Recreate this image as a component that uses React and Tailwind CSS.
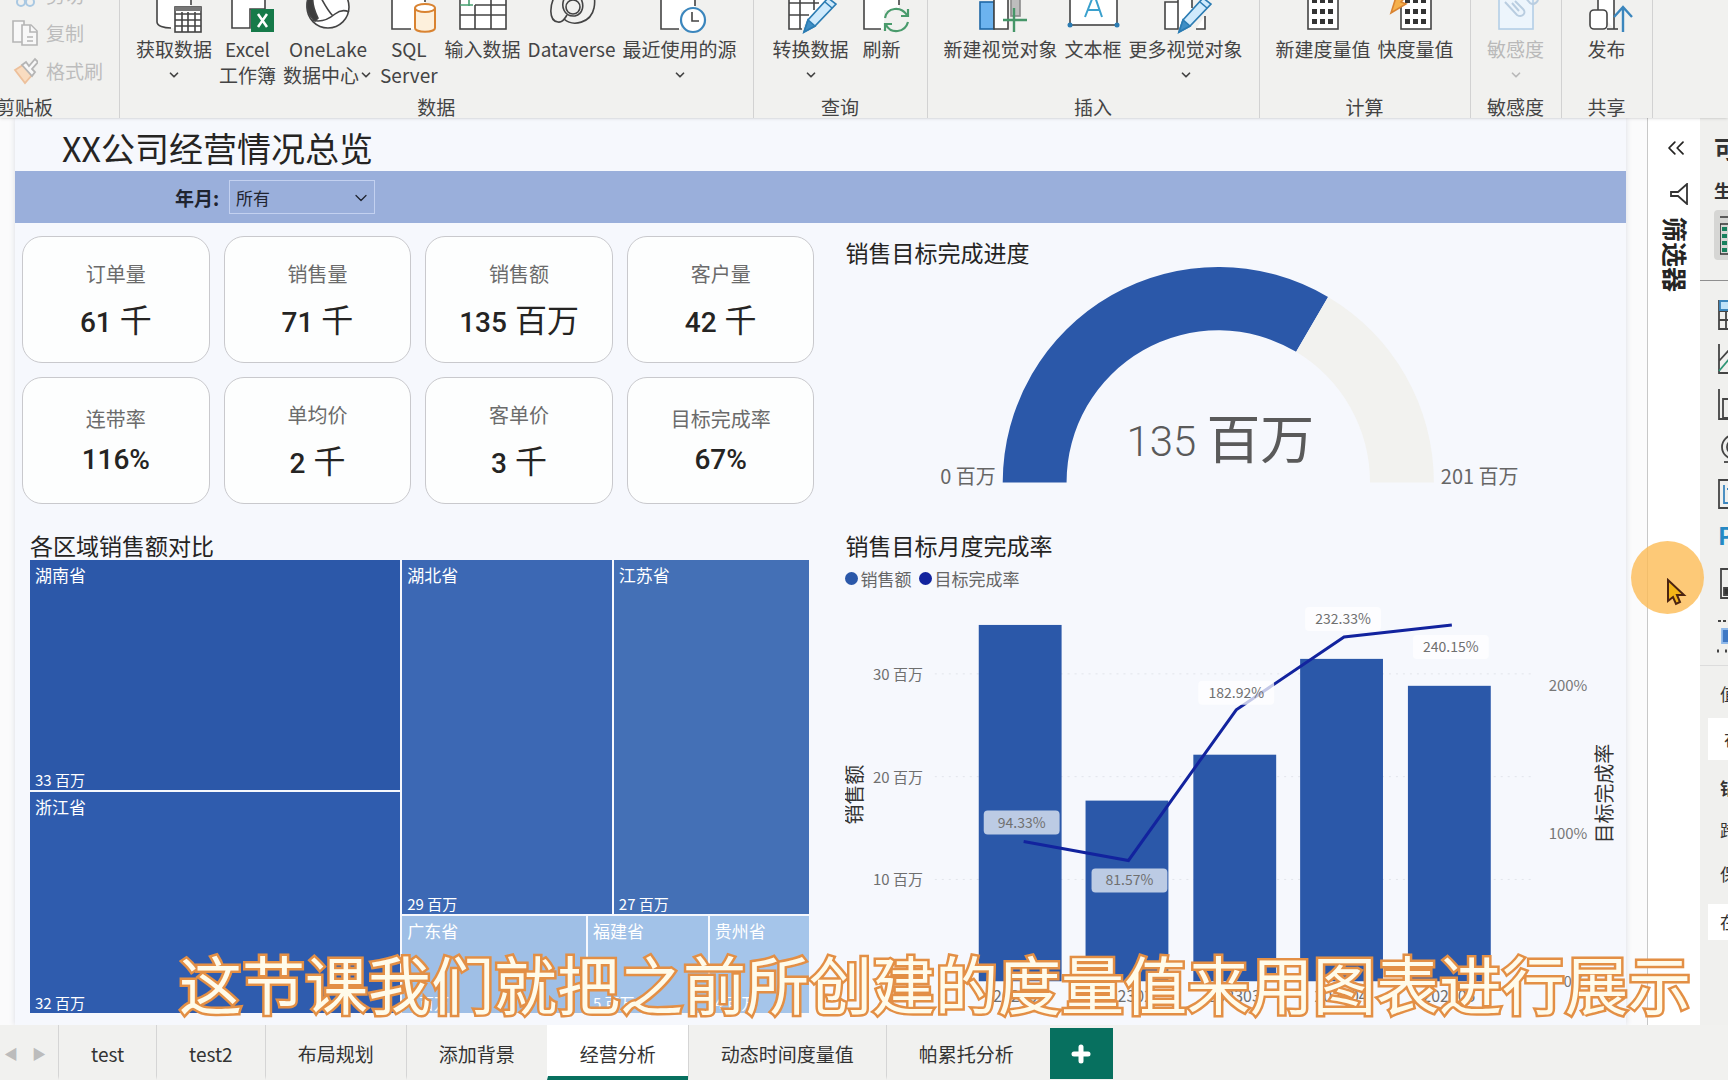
import { ChevronDown, ChevronsLeft, Plus } from 'lucide-react'

function Icon({ children }) {
  return (
    <svg viewBox="0 0 52 33" className="w-[52px] h-[33px] overflow-visible shrink-0" fill="none" stroke="#444" strokeWidth="1.6" aria-hidden="true">
      {children}
    </svg>
  )
}

function Pencil() {
  return (
    <g stroke="#2b7cb3" fill="#cfeafc">
      <path d="M19 32L23 20L43 -2L51 4L30 26Z" />
      <path d="M19 32L23 20L30 26Z" fill="#3f8fc6" />
      <path d="M40 2L47 8" />
    </g>
  )
}

function Keypad() {
  return (
    <>
      <rect x="11" y="-14" width="30" height="43" fill="#fff" />
      {[-2, 9, 19].map((y) =>
        [15, 23, 31].map((x) => <rect key={`${x}-${y}`} x={x} y={y} width="5" height="5" fill="#333" stroke="none" />)
      )}
    </>
  )
}

const icons = {
  getData: (
    <Icon>
      <path d="M9 -4V22C9 27 16 28 23 28L27 28V7H43V-4" fill="#fff" stroke="none" />
      <path d="M9 -4V22C9 26 16 28 23 28M43 -4V5" />
      <rect x="27" y="7" width="26" height="25" fill="#fff" />
      <path d="M27 9H53" strokeWidth="4" stroke="#777" />
      <path d="M27 14H53M27 20H53M27 26H53M34 12V32M40 12V32M47 12V32" />
    </Icon>
  ),
  excel: (
    <Icon>
      <path d="M10 -4V28H28V9H43V-4" fill="#fff" />
      <rect x="29" y="9" width="23" height="23" fill="#167a49" stroke="none" />
      <path d="M36 14L45 27M45 14L36 27" stroke="#fff" strokeWidth="2.5" />
    </Icon>
  ),
  oneLake: (
    <Icon>
      <circle cx="26" cy="7" r="21" fill="#fff" />
      <path d="M10 -8C3 -1 3 13 13 21L16 18C12 10 9 0 12 -8Z" fill="#3d3d3d" />
      <path d="M16 -8C20 0 25 10 31 16M10 20C20 23 27 19 33 14C38 10 43 10 47 12" />
    </Icon>
  ),
  sql: (
    <Icon>
      <path d="M9 -4V29H31V8H42V-4" fill="#fff" stroke="none" />
      <path d="M9 -4V29H28M42 -4V2" />
      <path d="M32 8V28C32 33 52 33 52 28V8" fill="#fdf0dc" stroke="#d98331" strokeWidth="2" />
      <ellipse cx="42" cy="8" rx="10" ry="4" fill="#fff" stroke="#d98331" strokeWidth="2" />
    </Icon>
  ),
  enterData: (
    <Icon>
      <rect x="3" y="-12" width="46" height="41" fill="#fff" />
      <path d="M18 5H49M3 15H49M18 5V29M34 -4V29" />
      <path d="M3 5H16M12 -2V6" stroke="#48a071" />
    </Icon>
  ),
  dataverse: (
    <Icon>
      <circle cx="27" cy="7" r="7" />
      <path d="M9 -4C4 4 2 21 12 22C17 23 19 18 21 15" />
      <path d="M19 -3C14 6 18 17 29 16C37 14 39 5 34 -3" />
      <path d="M18 19C27 27 45 23 48 8C49 3 49 0 48 -4" />
    </Icon>
  ),
  recent: (
    <Icon>
      <path d="M7 -4V29H27V10H41V-4" fill="#fff" stroke="none" />
      <path d="M7 -4V29H25M41 -4V6" />
      <circle cx="39" cy="20" r="12" fill="#fff" stroke="#3b86bd" strokeWidth="2.2" />
      <path d="M38 12V21H45" />
    </Icon>
  ),
  transform: (
    <Icon>
      <path d="M4 -4V29H17L22 20L40 0V-4Z" fill="#fff" stroke="none" />
      <path d="M4 -4V29H17M4 3H34M4 15H24M15 -4V29M29 -4V10" />
      <Pencil />
    </Icon>
  ),
  refresh: (
    <Icon>
      <path d="M8 -4V29H28V10H43V-4" fill="#fff" stroke="none" />
      <path d="M8 -4V29H25M43 -4V5" />
      <path d="M29 18C31 7 45 6 51 15M52 9V16H45M52 22C49 33 35 34 30 25M29 31V24H36" stroke="#4a9b6c" strokeWidth="2.2" />
    </Icon>
  ),
  newVisual: (
    <Icon>
      <rect x="5" y="2" width="14" height="27" fill="#6cb3ef" stroke="#1f67a6" />
      <path d="M19 29V-4H33V29Z" fill="#fff" />
      <rect x="36" y="-8" width="9" height="24" fill="#bdbdbd" stroke="#8a8a8a" />
      <path d="M39 8V32M28 20H52" stroke="#459668" strokeWidth="2.4" />
    </Icon>
  ),
  textBox: (
    <Icon>
      <rect x="3" y="-12" width="47" height="37" fill="#fff" />
      <path d="M18 17L27 -6L35 17M21 10H32" stroke="#3aa0cd" strokeWidth="2" />
      <circle cx="3" cy="25" r="2.5" fill="#2b7cb3" stroke="none" />
      <circle cx="50" cy="25" r="2.5" fill="#2b7cb3" stroke="none" />
    </Icon>
  ),
  moreVisuals: (
    <Icon>
      <path d="M5 2H18V29H5ZM18 29V-4H32V8M36 29H45V16" fill="#fff" />
      <Pencil />
    </Icon>
  ),
  measure: (
    <Icon>
      <Keypad />
    </Icon>
  ),
  quickMeasure: (
    <Icon>
      <Keypad />
      <path d="M7 -6L1 13L16 4L11 2L18 -6Z" fill="#f5b04b" stroke="#d98331" />
    </Icon>
  ),
  sensitivity: (
    <Icon>
      <rect x="9" y="-12" width="34" height="41" fill="#edf5fc" stroke="#b3cfe6" />
      <path d="M15 2L27 15C32 18 37 13 33 9L25 1M22 3L29 11M34 -4L40 3C44 6 50 1 47 -3" stroke="#b9cde0" strokeWidth="2" />
    </Icon>
  ),
  publish: (
    <Icon>
      <path d="M17 10V-2C17 -8 33 -8 33 -2V29" fill="#fff" />
      <rect x="9" y="10" width="17" height="19" rx="4" fill="#fff" />
      <path d="M26 29H37" />
      <path d="M42 32V7M33 17L42 7L51 17" stroke="#3b86bd" strokeWidth="2.4" />
    </Icon>
  ),
}

const ribbonGroups = [
  {
    name: '数据',
    items: [
      { icon: 'getData', label: '获取数据', menu: true },
      { icon: 'excel', label: 'Excel', second: '工作簿' },
      { icon: 'oneLake', label: 'OneLake', second: '数据中心', menu: true },
      { icon: 'sql', label: 'SQL', second: 'Server' },
      { icon: 'enterData', label: '输入数据' },
      { icon: 'dataverse', label: 'Dataverse' },
      { icon: 'recent', label: '最近使用的源', menu: true },
    ],
  },
  {
    name: '查询',
    items: [
      { icon: 'transform', label: '转换数据', menu: true },
      { icon: 'refresh', label: '刷新' },
    ],
  },
  {
    name: '插入',
    items: [
      { icon: 'newVisual', label: '新建视觉对象' },
      { icon: 'textBox', label: '文本框' },
      { icon: 'moreVisuals', label: '更多视觉对象', menu: true },
    ],
  },
  {
    name: '计算',
    items: [
      { icon: 'measure', label: '新建度量值' },
      { icon: 'quickMeasure', label: '快度量值' },
    ],
  },
  { name: '敏感度', items: [{ icon: 'sensitivity', label: '敏感度', menu: true, disabled: true }] },
  { name: '共享', items: [{ icon: 'publish', label: '发布' }] },
]

function Ribbon() {
  return (
    <header className="flex h-[118px] overflow-hidden bg-[#f1f1ef] text-[19px] leading-[26px] text-[#444] whitespace-nowrap shadow-sm relative">
      <div className="w-[120px] shrink-0 flex flex-col justify-between border-r border-[#d2d2d2]">
        <div className="-mt-6 pl-3 text-[#bdbdbd]">
          <button disabled className="flex items-center gap-2 h-[38px]">
            <svg viewBox="0 0 26 28" className="w-[26px] h-7" fill="none" stroke="#a9c8e2" strokeWidth="2">
              <circle cx="9" cy="21" r="4" />
              <circle cx="18" cy="21" r="4" />
              <path d="M11 17L18 2M16 17L9 2" />
            </svg>
            剪切
          </button>
          <button disabled className="flex items-center gap-2 h-[38px]">
            <svg viewBox="0 0 26 28" className="w-[26px] h-7" fill="#f8f8f8" stroke="#b5b5b5" strokeWidth="1.6">
              <path d="M1 2H12V23H1Z" />
              <path d="M10 6H19L25 12V26H10Z" />
              <path d="M18 6V13H25M15 18H21M15 22H21" />
            </svg>
            复制
          </button>
          <button disabled className="flex items-center gap-2 h-[38px]">
            <svg viewBox="0 0 26 28" className="w-[26px] h-7" fill="#f8f8f8" stroke="#b5b5b5" strokeWidth="1.8">
              <path d="M3 13L11 8L20 18L13 26Z" fill="#f9dcc0" stroke="#edc09b" />
              <path d="M10 8L14 5L17 9L23 2L26 5L20 12L23 15L20 19Z" />
            </svg>
            格式刷
          </button>
        </div>
        <div className="-ml-1 leading-[22px]">剪贴板</div>
      </div>
      {ribbonGroups.map((group) => (
        <div key={group.name} className="flex flex-col justify-between px-4 min-w-[91px] border-r border-[#d2d2d2] nth-[3]:min-w-[174px]">
          <div className="flex justify-center gap-[7px]">
            {group.items.map((item) => (
              <button key={item.label} disabled={item.disabled} className="flex flex-col items-center disabled:text-[#b9b9b9]">
                {icons[item.icon]}
                <span className="mt-[3px]">{item.label}</span>
                <span className="flex items-center h-[26px]">
                  {item.second}
                  {item.menu && <ChevronDown size={14} strokeWidth={3} />}
                </span>
              </button>
            ))}
          </div>
          <div className="text-center leading-[22px]">{group.name}</div>
        </div>
      ))}
    </header>
  )
}

const cards = [
  { label: '订单量', value: '61', unit: '千' },
  { label: '销售量', value: '71', unit: '千' },
  { label: '销售额', value: '135', unit: '百万' },
  { label: '客户量', value: '42', unit: '千' },
  { label: '连带率', value: '116%' },
  { label: '单均价', value: '2', unit: '千' },
  { label: '客单价', value: '3', unit: '千' },
  { label: '目标完成率', value: '67%' },
]

function KpiCard({ label, value, unit }) {
  return (
    <div className="h-[127px] pt-1.5 flex flex-col items-center justify-center rounded-[20px] border border-[#c9c9cd] bg-[#fdfefe]">
      <div className="text-xl leading-8 text-[#6b6b6b]">{label}</div>
      <div className="flex items-baseline gap-2 text-[#252423]">
        <span className="font-['Roboto',sans-serif] text-[28px] leading-[50px] font-medium">{value}</span>
        {unit && <span className="text-[32px] leading-[56px]">{unit}</span>}
      </div>
    </div>
  )
}

function Tile({ name, value, className }) {
  return (
    <div className={`flex flex-col justify-between px-[5px] pt-[3px] text-white whitespace-nowrap min-w-0 ${className}`}>
      <span className="text-[17px] leading-6">{name}</span>
      <span className="text-[15px] leading-5">{value}</span>
    </div>
  )
}

function Treemap() {
  return (
    <div className="flex-1 grid grid-cols-[371fr_408fr] gap-0.5">
      <div className="grid grid-rows-[230fr_221fr] gap-0.5">
        <Tile name="湖南省" value="33 百万" className="bg-[#2c58a9]" />
        <Tile name="浙江省" value="32 百万" className="bg-[#2f5cae]" />
      </div>
      <div className="grid grid-rows-[354fr_97fr] gap-0.5">
        <div className="grid grid-cols-[210fr_196fr] gap-0.5">
          <Tile name="湖北省" value="29 百万" className="bg-[#3c68b4]" />
          <Tile name="江苏省" value="27 百万" className="bg-[#4470b6]" />
        </div>
        <div className="grid grid-cols-[184fr_120fr_100fr] gap-0.5">
          <Tile name="广东省" value="7 百万" className="bg-[#9fbfe6]" />
          <Tile name="福建省" value="5 百万" className="bg-[#a2c2e8]" />
          <Tile name="贵州省" value="4 百万" className="bg-[#a5c5ea]" />
        </div>
      </div>
    </div>
  )
}

function Gauge() {
  return (
    <svg viewBox="0 0 782 265" className="w-full overflow-visible block" role="img" aria-label="销售目标完成进度">
      <path d="M158 215A216 216 0 0 1 484 29L452 84A152 152 0 0 0 222 215Z" fill="#2b58a9" />
      <path d="M484 29A216 216 0 0 1 590 215H526A152 152 0 0 0 452 84Z" fill="#f2f2ef" />
      <text x="151" y="216" textAnchor="end" fontSize="20" fill="#666">0 百万</text>
      <text x="597" y="216" fontSize="20" fill="#666">201 百万</text>
      <text x="376" y="191" textAnchor="middle" fill="#5a5a5a">
        <tspan dy="-3" fontFamily="Roboto, sans-serif" fontWeight="300" fontSize="42">135 </tspan>
        <tspan dy="3" fontSize="54">百万</tspan>
      </text>
    </svg>
  )
}

const months = [
  { month: '202301', x: 134, top: 30 },
  { month: '202302', x: 241, top: 206 },
  { month: '202303', x: 349, top: 160 },
  { month: '202304', x: 456, top: 64 },
  { month: '202305', x: 564, top: 91 },
]

const rates = [
  { text: '94.33%', x: 177, y: 228, boxed: true },
  { text: '81.57%', x: 285, y: 286, boxed: true },
  { text: '182.92%', x: 392, y: 98 },
  { text: '232.33%', x: 499, y: 24 },
  { text: '240.15%', x: 607, y: 52 },
]

function ComboChart() {
  return (
    <svg viewBox="0 0 782 430" className="w-full block" role="img" aria-label="销售目标月度完成率">
      {[79, 182, 285].map((y, i) => (
        <g key={y}>
          <path d={`M90 ${y}H690`} stroke="#e2e5eb" strokeDasharray="2 5" />
          <text x="28" y={y + 6} fontSize="15" fill="#6f6f6f">{30 - i * 10} 百万</text>
        </g>
      ))}
      {months.map((m) => (
        <g key={m.month}>
          <rect x={m.x} y={m.top} width="83" height={387 - m.top} fill="#2b58a9" />
          <text x={m.x + 41} y="408" textAnchor="middle" fontSize="16" fill="#6f6f6f">{m.month}</text>
        </g>
      ))}
      <polyline points="179,247 284,266 392,115 500,42 608,30" fill="none" stroke="#12239e" strokeWidth="3" />
      {rates.map((r) => (
        <g key={r.text}>
          <rect x={r.x - 38} y={r.y - 12} width="76" height="24" rx="4" fill={r.boxed ? '#bccbe4' : '#fff'} fillOpacity={r.boxed ? 1 : 0.75} />
          <text x={r.x} y={r.y + 5} textAnchor="middle" fontSize="14" fill="#6f6f6f">{r.text}</text>
        </g>
      ))}
      <g fontSize="15" fill="#777">
        <text x="705" y="96">200%</text>
        <text x="705" y="244">100%</text>
        <text x="742" y="393" textAnchor="end">0%</text>
      </g>
      <g fontSize="20" fill="#333" textAnchor="middle">
        <text transform="translate(17 200) rotate(-90)">销售额</text>
        <text transform="translate(768 199) rotate(-90)">目标完成率</text>
      </g>
    </svg>
  )
}

function Report() {
  return (
    <main className="flex-1 min-w-0 bg-[#fbfbfc] pl-[15px] pr-[21px] flex">
      <div className="flex-1 min-w-0 flex flex-col bg-[#f6f8fd] shadow-[0_0_6px_#d9dbe2]">
        <h1 className="h-[53px] pl-[47px] pt-1.5 text-[34px] leading-[48px] font-normal text-[#252423]">XX公司经营情况总览</h1>
        <div className="h-[52px] bg-[#9aafdb] flex items-center pl-40 text-[#1f2430]">
          <label htmlFor="month" className="pt-0.5 text-[19px] font-bold w-[54px]">年月:</label>
          <div className="relative">
            <select id="month" className="appearance-none w-[146px] h-[34px] pl-1.5 pt-0.5 border border-[#c3d1f0] bg-transparent text-[17px]">
              <option>所有</option>
            </select>
            <ChevronDown size={20} strokeWidth={1.5} className="absolute right-1 top-2 pointer-events-none" />
          </div>
        </div>
        <div className="flex-1 grid grid-cols-[813fr_799fr]">
          <section className="flex flex-col pt-[13px] pl-[7px] pr-[13px] pb-3">
            <div className="grid grid-cols-4 gap-[14px]">
              {cards.map((card) => (
                <KpiCard key={card.label} {...card} />
              ))}
            </div>
            <div className="flex-1 flex flex-col mt-7 ml-2 mr-[5px]">
              <h2 className="mb-0.5 text-[23px] leading-[26px] text-[#252423]">各区域销售额对比</h2>
              <Treemap />
            </div>
          </section>
          <section className="pt-4 pl-[18px]">
            <h2 className="mb-[3px] text-[23px] leading-[26px] text-[#252423]">销售目标完成进度</h2>
            <Gauge />
            <h2 className="mb-[3px] text-[23px] leading-[26px] text-[#252423]">销售目标月度完成率</h2>
            <div className="flex items-center gap-2 h-[34px] text-[17px] text-[#666]">
              <span className="flex items-center gap-0.5">
                <span className="w-[13px] h-[13px] rounded-full bg-[#2b58a9]"></span>销售额
              </span>
              <span className="flex items-center gap-0.5">
                <span className="w-[13px] h-[13px] rounded-full bg-[#12239e]"></span>目标完成率
              </span>
            </div>
            <ComboChart />
          </section>
        </div>
      </div>
    </main>
  )
}

function FilterPane() {
  return (
    <aside className="w-[53px] shrink-0 bg-white border-l border-[#c8c8c8] flex flex-col items-center pt-4 pl-1 text-[#252423]">
      <button aria-label="展开">
        <ChevronsLeft size={28} strokeWidth={1.5} />
      </button>
      <svg viewBox="0 0 20 22" className="w-5 h-[22px] mt-[21px] ml-1.5" fill="none" stroke="#333" strokeWidth="1.8">
        <path d="M18 1V21L9 13H2V9H9Z" />
      </svg>
      <h2 className="mt-3 text-[25px] leading-7 font-bold [writing-mode:vertical-rl] [text-orientation:sideways]">筛选器</h2>
    </aside>
  )
}

function VisualPane() {
  return (
    <aside className="w-7 shrink-0 bg-[#f0f0ee] overflow-hidden whitespace-nowrap text-[#333] text-[17px]">
      <div className="pl-3.5 pt-3">
        <h2 className="text-[24px] leading-9 font-bold">可视化</h2>
        <div className="mt-2 text-[18px] leading-8 font-bold">生成视觉对象</div>
      </div>
      <div className="ml-3.5 mt-1 w-12 h-[50px] rounded bg-[#d6d6d4] pt-1.5 pl-1.5">
        <svg viewBox="0 0 36 40" className="w-9 h-10" fill="none" stroke="#333" strokeWidth="1.6">
          <path d="M0 1H36M0 8H36V38H0Z" />
          <path d="M2 13H34M2 20H34M2 27H34M2 34H34" stroke="#16805d" strokeWidth="4" strokeDasharray="5 2" />
        </svg>
      </div>
      <div className="mt-5 border-t border-[#8f8f8f]"></div>
      <svg viewBox="0 0 28 384" className="w-7 h-[384px]" fill="none" stroke="#444" strokeWidth="1.8">
        <path d="M19 19V48H30M19 30H30M19 39H30M26 20V48" />
        <path d="M20 20H30V29H20Z" fill="#bfe2f8" stroke="#3b86bd" />
        <path d="M19 63V92H30M19 80L30 68" />
        <path d="M19 90L30 77" stroke="#2f9677" />
        <path d="M19 108V138H30M23 118H30V137H23Z" />
        <circle cx="34" cy="166" r="12" />
        <circle cx="34" cy="166" r="7" />
        <path d="M24 181H30" />
        <path d="M30 199H19V227H30" />
        <path d="M24 204V222H30M27 208H30" stroke="#3b86bd" />
        <path d="M30 288H21V317H30" />
        <path d="M24 307H30V314H24Z" fill="#333" />
        <path d="M18 340H30" strokeDasharray="3 2" />
        <path d="M22 348H30V362H22Z" fill="#3f78c4" stroke="#8fb9ea" />
        <path d="M17 370H30" strokeDasharray="2 6" strokeWidth="3" />
        <text x="18" y="264" fontSize="24" fontWeight="bold" fill="#2589c4" stroke="none">Py</text>
      </svg>
      <div className="border-t border-[#dcdcdc] pt-3 pl-5 leading-8">值</div>
      <div className="mt-2 ml-2 w-40 pl-4 bg-white leading-[42px]">在此处添加数据字段</div>
      <div className="mt-3 pl-5 leading-8 font-bold">钻取</div>
      <div className="mt-2.5 pl-5 leading-8">跨报告</div>
      <div className="mt-3 pl-5 leading-8">保留所有筛选器</div>
      <div className="mt-3.5 ml-2 w-40 pl-3 bg-white leading-9">在此处添加钻取字段</div>
    </aside>
  )
}

const pages = ['test', 'test2', '布局规划', '添加背景', '经营分析', '动态时间度量值', '帕累托分析']

function PageTabs() {
  return (
    <nav className="flex h-[55px] shrink-0 bg-[#f1f1ef] text-[19px] text-[#333] whitespace-nowrap">
      <div className="w-[58px] flex items-center justify-between pl-1 pr-3 text-[#bcbcbc] text-sm">
        <button aria-label="上一页">◀</button>
        <button aria-label="下一页">▶</button>
      </div>
      {pages.map((page) => (
        <button
          key={page}
          className={
            page === '经营分析'
              ? 'px-8 pt-2 border-l border-b-4 border-l-white border-b-[#07705f] bg-white'
              : 'px-8 pt-2 border-l border-b-4 border-l-[#d5d5d5] border-b-transparent'
          }
        >
          {page}
        </button>
      ))}
      <button aria-label="新建页" className="w-[63px] ml-1 mt-[3px] mb-px flex items-center justify-center bg-[#07705f] text-white">
        <Plus size={24} strokeWidth={5} />
      </button>
    </nav>
  )
}

export default function App() {
  return (
    <div className="relative min-h-screen flex flex-col overflow-hidden bg-[#f1f1ef] font-['Noto_Sans_CJK_SC',sans-serif]">
      <Ribbon />
      <div className="flex-1 flex">
        <Report />
        <FilterPane />
        <VisualPane />
      </div>
      <PageTabs />

      {/* video caption */}
      <p className="absolute inset-x-0 bottom-[58px] pl-[142px] text-center text-[63px] leading-[80px] whitespace-nowrap text-[#fffbea] [-webkit-text-stroke:5px_#e38f45] [paint-order:stroke_fill]">
        这节课我们就把之前所创建的度量值来用图表进行展示
      </p>

      {/* mouse pointer with highlight */}
      <div className="absolute right-6 top-[541px] w-[73px] h-[73px] rounded-full bg-[#fdbb55]/80">
        <svg viewBox="0 0 20 28" className="absolute left-9 top-[37px] w-5 h-7" fill="#f3b518" stroke="#4b2412" strokeWidth="2">
          <path d="M1 2V23L6 19L9 26L13 24L10 17H17Z" />
        </svg>
      </div>
    </div>
  )
}
